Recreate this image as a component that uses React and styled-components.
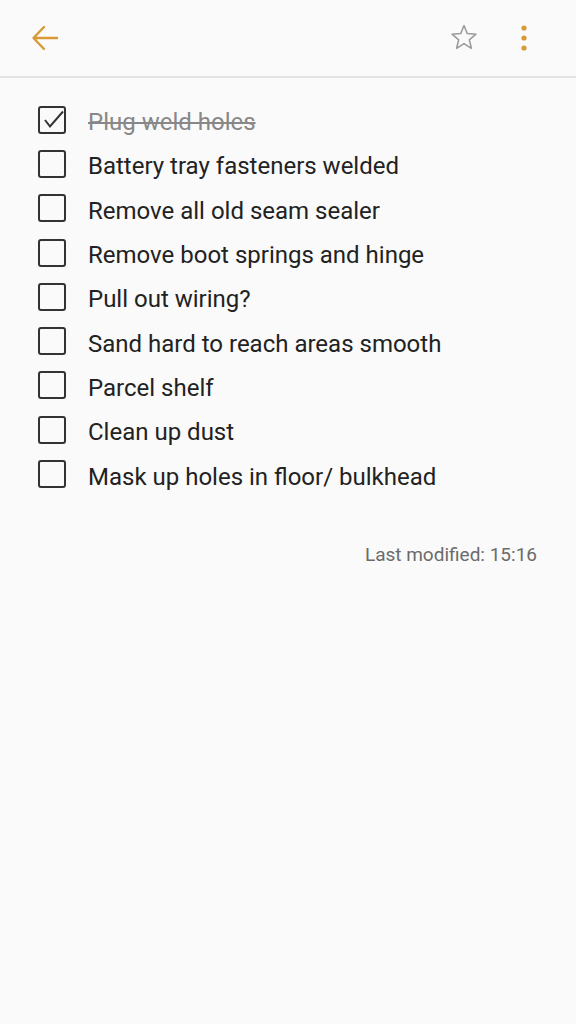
import React from 'react';
import styled, { createGlobalStyle } from 'styled-components';

const GlobalStyle = createGlobalStyle`
  html, body {
    margin: 0;
    padding: 0;
    background: #fafafa;
  }
  body {
    font-family: Roboto, "Noto Sans", sans-serif;
  }
`;

const items = [
  { text: 'Plug weld holes', done: true },
  { text: 'Battery tray fasteners welded' },
  { text: 'Remove all old seam sealer' },
  { text: 'Remove boot springs and hinge' },
  { text: 'Pull out wiring?' },
  { text: 'Sand hard to reach areas smooth' },
  { text: 'Parcel shelf' },
  { text: 'Clean up dust' },
  { text: 'Mask up holes in floor/ bulkhead' },
];

const Page = styled.div`
  width: 576px;
  min-height: 1024px;
  background: #fafafa;
`;

const Toolbar = styled.header`
  display: flex;
  align-items: center;
  padding: 0 31px 0 24px;
  border-bottom: 2px solid #e2e2e2;
  box-sizing: border-box;
  height: 78px;
`;

const IconButton = styled.button`
  width: 42px;
  height: 42px;
  border: 0;
  padding: 0;
  background: none;
  display: flex;
  align-items: center;
  justify-content: center;
  margin-left: ${(p) => p.$gap || 0}px;
`;

const Spacer = styled.div`
  flex: 1;
`;

const List = styled.ul`
  list-style: none;
  margin: 0;
  padding: 22px 0 0 38px;
`;

const Row = styled.li`
  height: 44.3px;
  display: flex;
  align-items: center;
`;

const Box = styled.span`
  width: 28px;
  height: 28px;
  margin-bottom: 5px;
  box-sizing: border-box;
  border: 2px solid #333;
  border-radius: 3px;
  display: flex;
  align-items: center;
  justify-content: center;
  flex-shrink: 0;

  svg {
    overflow: visible;
  }
`;

const Label = styled.span`
  margin-left: 22px;
  font-size: 24px;
  color: ${(p) => (p.$done ? '#888' : '#222')};
  text-decoration: ${(p) => (p.$done ? 'line-through' : 'none')};
  text-decoration-thickness: 1.5px;
`;

const Modified = styled.div`
  text-align: right;
  padding: 44px 39px 0 0;
  font-size: 19px;
  color: #6b6b6b;
`;

const Check = () => (
  <svg width="24" height="24" viewBox="0 0 24 24">
    <path d="M5 12 L10 18.5 L23 3.5" fill="none" stroke="#333" strokeWidth="2" />
  </svg>
);

export default function App() {
  return (
    <Page>
      <GlobalStyle />
      <Toolbar>
        <IconButton aria-label="Back">
          <svg width="30" height="30" viewBox="0 0 30 30">
            <path d="M27 15 H4 M14 4 L3.5 15 L14 26" fill="none" stroke="#d79a35" strokeWidth="2.4" strokeLinecap="round" strokeLinejoin="round" />
          </svg>
        </IconButton>
        <Spacer />
        <IconButton aria-label="Favourite">
          <svg width="30" height="30" viewBox="0 0 30 30">
            <path d="M15 2.5 L18.3 10.6 L27 11.2 L20.3 16.8 L22.4 25.3 L15 20.7 L7.6 25.3 L9.7 16.8 L3 11.2 L11.7 10.6 Z" fill="none" stroke="#9a9a9a" strokeWidth="1.5" strokeLinejoin="round" />
          </svg>
        </IconButton>
        <IconButton aria-label="More" $gap={18}>
          <svg width="8" height="26" viewBox="0 0 8 26">
            <circle cx="4" cy="3" r="2.6" fill="#d79a35" />
            <circle cx="4" cy="13" r="2.6" fill="#d79a35" />
            <circle cx="4" cy="23" r="2.6" fill="#d79a35" />
          </svg>
        </IconButton>
      </Toolbar>
      <List>
        {items.map((it) => (
          <Row key={it.text}>
            <Box>{it.done && <Check />}</Box>
            <Label $done={it.done}>{it.text}</Label>
          </Row>
        ))}
      </List>
      <Modified>Last modified: 15:16</Modified>
    </Page>
  );
}
